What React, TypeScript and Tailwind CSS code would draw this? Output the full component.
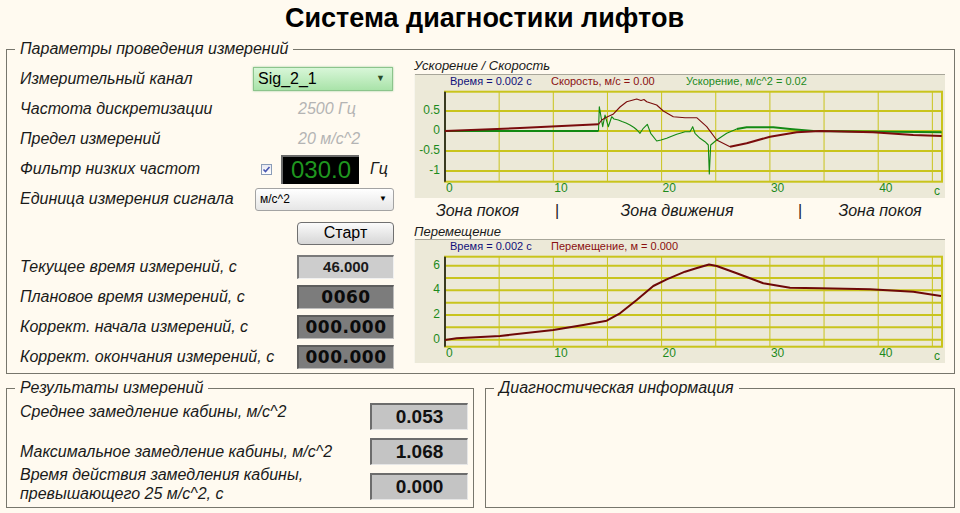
import React from "react";

type Pt = [number, number];

const GRID = "#c9c41c";
const X0 = 445;
const X1 = 942;
const XS = 10.83; // px per second

const toPath = (pts: Pt[]) =>
    pts.map((p, i) => `${i ? "L" : "M"}${p[0]} ${p[1]}`).join(" ");

const velocityRest: Pt[] = [[445, 131], [520, 128], [598.5, 124.3]];
const velocityMove: Pt[] = [
    [598.5, 124.3], [601.7, 120], [607, 117], [613, 114.3], [620, 107],
    [626.7, 101.7], [636.7, 99], [641, 100.5], [644, 99.5], [646.7, 101.7], [656.7, 105],
    [663.3, 111], [673.3, 116.7], [685, 117.7], [696.7, 117.7], [706.7, 126.7], [716.7, 140],
    [730, 146.7],
];
const velocityEnd: Pt[] = [
    [730, 146.7], [746.7, 143.3], [770, 136.7], [796.7, 132.3], [820, 131], [873, 132.3],
    [913.3, 135], [941.7, 136],
];

const accelRest: Pt[] = [[445, 131], [598.5, 131]];
const accelMove: Pt[] = [
    [598.5, 131], [599.3, 106.7], [602.7, 126.7], [605, 115], [608.3, 126.7],
    [611.7, 116.7], [614, 119], [618.3, 120], [622, 121.5], [626, 123], [630, 125], [634, 127.5],
    [637, 130], [640, 133.3], [643.3, 128.3], [647.3, 124.3], [650.7, 133.3], [656.7, 141],
    [661, 140], [666.7, 138.3], [671, 136.5], [676.7, 134.3], [681, 133], [685, 131.7], [690, 131.7],
    [692.7, 126.7], [695, 133.3], [700, 138.3], [705, 141.7], [708.3, 145], [709.3, 174],
    [710.7, 145], [716.7, 140], [726.7, 133.3], [736.7, 129],
];
const accelEnd: Pt[] = [
    [736.7, 129], [746.7, 127.3], [773.3, 127.3], [790, 129], [813.3, 131], [941.7, 132.3],
];

const displacement: Pt[] = [
    [445, 340], [456.7, 338.3], [500, 336], [553.3, 330], [583.3, 325], [606.7, 320.7],
    [620, 313.3], [636.7, 300], [653.3, 286], [666.7, 279.3], [685, 271.7], [697, 268],
    [709, 264.5], [716.7, 266], [736.7, 273.3], [763.3, 283.3], [790, 287.7], [820, 288.3],
    [870, 289.3], [913.3, 291.7], [941, 296],
];

type Series = { pts: Pt[]; color: string; width: number };
type Legend = { x: number; text: string; color: string };

function Chart({
    top,
    plotTop,
    plotBottom,
    hLines,
    yLabels,
    legend,
    series,
}: {
    top: number;
    plotTop: number;
    plotBottom: number;
    hLines: number[];
    yLabels: { y: number; t: string }[];
    legend: Legend[];
    series: Series[];
}) {
    const vLines = Array.from({ length: 9 }, (_, i) => X0 + (i + 1) * 5 * XS);
    const xLabels = [0, 10, 20, 30, 40];
    return (
        <div className="h-[124px] w-[531px] bg-[#ece9d8]">
            <svg width="531" height="124" viewBox={`414 ${top} 531 124`} fontFamily="'Liberation Sans', Arial, sans-serif">
                <line x1="414" y1={top + 0.5} x2="945" y2={top + 0.5} stroke="#a8a69a" />
                <line x1="414.5" y1={top} x2="414.5" y2={top + 124} stroke="#f7f5ec" />
                {legend.map((l) => (
                    <text key={l.text} x={l.x} y={top + 8} fontSize="11" fill={l.color} dominantBaseline="middle">
                        {l.text}
                    </text>
                ))}
                {vLines.map((x) => (
                    <line key={x} x1={x} y1={plotTop} x2={x} y2={plotBottom} stroke={GRID} strokeWidth="1" />
                ))}
                {hLines.map((y) => (
                    <line key={y} x1={X0} y1={y} x2={X1} y2={y} stroke={GRID} strokeWidth="2" />
                ))}
                <rect x={X0} y={plotTop} width={X1 - X0} height={plotBottom - plotTop} fill="none" stroke={GRID} strokeWidth="2" />
                <line x1={X0} y1={plotTop} x2={X0} y2={plotBottom} stroke="#3a3a20" strokeWidth="2" />
                {yLabels.map((l) => (
                    <text key={l.t} x="440" y={l.y} fontSize="12" fill="#1c8a1c" textAnchor="end" dominantBaseline="middle">
                        {l.t}
                    </text>
                ))}
                {xLabels.map((v) => (
                    <text key={v} x={X0 + v * XS + 1} y={plotBottom + 7} fontSize="12" fill="#1c8a1c" dominantBaseline="middle">
                        {v}
                    </text>
                ))}
                <text x="934" y={plotBottom + 10} fontSize="12" fill="#1c8a1c" dominantBaseline="middle">
                    с
                </text>
                {series.map((s, i) => (
                    <path key={i} d={toPath(s.pts)} fill="none" stroke={s.color} strokeWidth={s.width} strokeLinejoin="round" />
                ))}
            </svg>
        </div>
    );
}

function Label({ children, className = "" }: { children: React.ReactNode; className?: string }) {
    return <span className={`text-[16px] italic leading-[18px] text-[#1a1a1a] ${className}`}>{children}</span>;
}

function ValueBox({ value, dark }: { value: string; dark?: boolean }) {
    return dark ? (
        <div className="ml-[44px] flex h-[24px] w-[97px] items-center justify-center border-t-2 border-l-2 border-[#5e5e5e] border-b border-r border-b-[#bdbdbd] border-r-[#bdbdbd] bg-[#7c7c7c] font-['DejaVu_Sans',sans-serif] text-[17px] font-bold tracking-[0.5px] text-[#0a0a0a]">
            {value}
        </div>
    ) : (
        <div className="ml-[44px] flex h-[24px] w-[97px] items-center justify-center border-t-2 border-l-2 border-[#7a7a7a] border-b border-r border-b-[#f0f0f0] border-r-[#f0f0f0] bg-[#cdcdcd] text-[15px] font-bold text-[#1a1a1a]">
            {value}
        </div>
    );
}

function ResultBox({ value, className = "" }: { value: string; className?: string }) {
    return (
        <div className={`flex h-[27px] w-[98px] items-center justify-center border-t-2 border-l-2 border-[#6c6c6c] border-b border-r border-b-[#e6e6e6] border-r-[#e6e6e6] bg-[#c4c4c4] text-[19px] font-bold text-[#111] ${className}`}>
            {value}
        </div>
    );
}

const rows = [
    { label: "Текущее время измерений, с", value: "46.000", dark: false },
    { label: "Плановое время измерений, с", value: "0060", dark: true },
    { label: "Коррект. начала измерений, с", value: "000.000", dark: true },
    { label: "Коррект. окончания измерений, с", value: "000.000", dark: true },
];

export default function App() {
    return (
        <div className="h-[513px] w-[960px] overflow-hidden bg-[#fffaf0] font-['Liberation_Sans',Arial,sans-serif] text-[#111]">
            <div className="flex h-[40px] justify-center pl-[9px] text-[27px] font-bold leading-[36px] text-black">
                Система диагностики лифтов
            </div>

            <fieldset className="ml-[6px] w-[949px] border border-[#77766c] pl-[8px] pb-[1px]">
                <legend className="px-[5px] text-[16px] italic leading-[18px] text-[#1a1a1a]">
                    Параметры проведения измерений
                </legend>
                <div className="flex items-start pl-[5px]">
                    <div className="flex w-[374px] flex-col pt-[6px]">
                        <div className="flex h-[30px] items-center">
                            <Label className="w-[233px]">Измерительный канал</Label>
                            <div className="flex h-[24px] w-[140px] items-center justify-between border border-[#8cc48c] bg-gradient-to-b from-[#d8f6d8] to-[#a9e3a9] pl-[4px] pr-[7px] text-[16px] text-black shadow-[0_0_2px_#9fcf9f]">
                                <span>Sig_2_1</span>
                                <span className="text-[9px] text-[#2a4a2a]">▼</span>
                            </div>
                        </div>
                        <div className="flex h-[30px] items-center">
                            <Label className="w-[233px]">Частота дискретизации</Label>
                            <span className="pl-[45px] text-[16px] italic text-[#b4b4b4]">2500 Гц</span>
                        </div>
                        <div className="flex h-[30px] items-center">
                            <Label className="w-[233px]">Предел измерений</Label>
                            <span className="pl-[45px] text-[16px] italic text-[#b4b4b4]">20 м/с^2</span>
                        </div>
                        <div className="flex h-[30px] items-center">
                            <Label className="w-[233px]">Фильтр низких частот</Label>
                            <div className="ml-[8px] flex h-[11px] w-[11px] items-center justify-center border border-[#8a9cb8] bg-gradient-to-b from-[#e8e8f0] to-[#ffffff]">
                                <svg width="9" height="9" viewBox="0 0 9 9">
                                    <path d="M1.5 4.5 L3.5 6.5 L7.5 2" fill="none" stroke="#4856b0" strokeWidth="1.6" />
                                </svg>
                            </div>
                            <div className="ml-[9px] flex h-[29px] w-[78px] items-center justify-center border-t-2 border-l-2 border-[#6a6a6a] bg-black text-[24px] leading-none text-[#1f961f]">
                                030.0
                            </div>
                            <span className="ml-[11px] text-[16px] italic text-[#1a1a1a]">Гц</span>
                        </div>
                        <div className="flex h-[30px] items-center">
                            <Label className="w-[233px]">Единица измерения сигнала</Label>
                            <div className="ml-[2px] flex h-[23px] w-[139px] items-center justify-between rounded-[3px] border border-[#a3a3a3] bg-gradient-to-b from-[#ffffff] to-[#e6e6e6] pl-[4px] pr-[6px] text-[12px] text-black">
                                <span>м/с^2</span>
                                <span className="text-[8px]">▼</span>
                            </div>
                        </div>
                        <div className="flex h-[38px] items-center">
                            <div className="w-[233px]" />
                            <button
                                type="button"
                                className="ml-[44px] flex h-[23px] w-[97px] items-center justify-center rounded-[4px] border border-[#707070] bg-gradient-to-b from-[#fbfbfb] to-[#d6d6d6] text-[16px] text-black"
                            >
                                Старт
                            </button>
                        </div>
                        {rows.map((r) => (
                            <div key={r.label} className="flex h-[30px] items-center">
                                <Label className="w-[233px] whitespace-nowrap">{r.label}</Label>
                                <ValueBox value={r.value} dark={r.dark} />
                            </div>
                        ))}
                    </div>

                    <div className="ml-[20px] flex w-[531px] flex-col">
                        <div className="h-[16px] text-[13px] italic leading-[16px] text-[#1a1a1a]">Ускорение / Скорость</div>
                        <Chart
                            top={74}
                            plotTop={91.7}
                            plotBottom={181.7}
                            hLines={[111, 131, 151, 171]}
                            yLabels={[
                                { y: 111, t: "0.5" },
                                { y: 131, t: "0" },
                                { y: 151, t: "-0.5" },
                                { y: 171, t: "-1" },
                            ]}
                            legend={[
                                { x: 450, text: "Время = 0.002 с", color: "#10107a" },
                                { x: 551, text: "Скорость, м/с = 0.00", color: "#8a1010" },
                                { x: 686, text: "Ускорение, м/с^2 = 0.02", color: "#1c8a1c" },
                            ]}
                            series={[
                                { pts: accelRest, color: "#138a13", width: 2 },
                                { pts: accelMove, color: "#138a13", width: 1.1 },
                                { pts: accelEnd, color: "#138a13", width: 2 },
                                { pts: velocityRest, color: "#7a0c0c", width: 2 },
                                { pts: velocityMove, color: "#7a0c0c", width: 1.1 },
                                { pts: velocityEnd, color: "#7a0c0c", width: 2 },
                            ]}
                        />
                        <div className="flex h-[26px] items-center text-[16px] italic text-[#1a1a1a]">
                            <span className="w-[127px] text-center">Зона покоя</span>
                            <span className="w-[32px] text-center not-italic">|</span>
                            <span className="w-[208px] text-center">Зона движения</span>
                            <span className="w-[38px] text-center not-italic">|</span>
                            <span className="w-[122px] text-center">Зона покоя</span>
                        </div>
                        <div className="h-[15px] text-[13px] italic leading-[15px] text-[#1a1a1a]">Перемещение</div>
                        <Chart
                            top={239}
                            plotTop={256.7}
                            plotBottom={346.7}
                            hLines={[265.7, 278, 290.3, 302.7, 315, 327.3, 339.7]}
                            yLabels={[
                                { y: 265.7, t: "6" },
                                { y: 290.3, t: "4" },
                                { y: 315, t: "2" },
                                { y: 339.7, t: "0" },
                            ]}
                            legend={[
                                { x: 450, text: "Время = 0.002 с", color: "#10107a" },
                                { x: 551, text: "Перемещение, м = 0.000", color: "#8a1010" },
                            ]}
                            series={[{ pts: displacement, color: "#6e0808", width: 2 }]}
                        />
                    </div>
                </div>
            </fieldset>

            <div className="mt-[5px] flex">
                <fieldset className="ml-[6px] h-[129px] w-[468px] border border-[#77766c] pl-[8px]">
                    <legend className="px-[5px] text-[16px] italic leading-[18px] text-[#1a1a1a]">Результаты измерений</legend>
                    <div className="flex flex-col pl-[5px]">
                        <div className="flex h-[37px] items-start">
                            <Label className="mt-[6px] w-[350px]">Среднее замедление кабины, м/с^2</Label>
                            <ResultBox value="0.053" className="mt-[6px]" />
                        </div>
                        <div className="flex h-[31px] items-start">
                            <Label className="mt-[9px] w-[350px]">Максимальное замедление кабины, м/с^2</Label>
                            <ResultBox value="1.068" className="mt-[4px]" />
                        </div>
                        <div className="flex items-start">
                            <Label className="w-[350px] leading-[19px]">
                                Время действия замедления кабины,
                                <br />
                                превышающего 25 м/с^2, с
                            </Label>
                            <ResultBox value="0.000" className="mt-[8px]" />
                        </div>
                    </div>
                </fieldset>
                <fieldset className="ml-[11px] h-[129px] w-[470px] border border-[#77766c] pl-[8px]">
                    <legend className="px-[5px] text-[16px] italic leading-[18px] text-[#1a1a1a]">Диагностическая информация</legend>
                </fieldset>
            </div>
        </div>
    );
}
